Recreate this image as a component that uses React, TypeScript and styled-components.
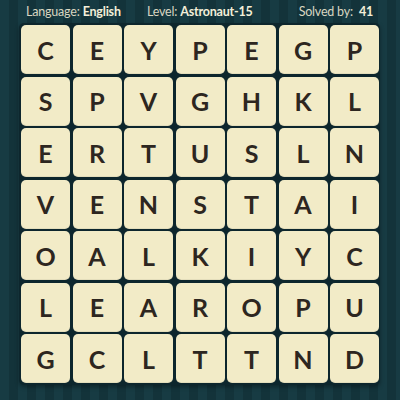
import React from "react";
import styled, { createGlobalStyle } from "styled-components";

const rows = [
  "CEYPEGP",
  "SPVGHKL",
  "ERTUSLN",
  "VENSTAI",
  "OALKIYC",
  "LEAROPU",
  "GCLTTND",
];

const GlobalStyle = createGlobalStyle`
  html, body {
    margin: 0;
    padding: 0;
  }
  body {
    font-family: "Lato", "Noto Sans", sans-serif;
  }
`;

const Page = styled.div`
  width: 400px;
  height: 400px;
  box-sizing: border-box;
  padding: 2px 0 0 21px;
  background-color: #163840;
  background-image: repeating-linear-gradient(
    90deg,
    #173b43 0px,
    #173b43 9px,
    #13333a 9px,
    #13333a 18px
  );
  overflow: hidden;
`;

const InfoBar = styled.div`
  display: flex;
  align-items: center;
  width: 357px;
  height: 18px;
  padding: 0 5px;
  box-sizing: border-box;
  font-size: 12.5px;
  color: #d9d6c1;
  letter-spacing: -0.2px;
`;

const Info = styled.div<{ $grow?: boolean }>`
  flex: ${(p) => (p.$grow ? 1 : "none")};
  white-space: nowrap;

  b {
    font-weight: 700;
    color: #f3efd9;
  }
`;

const Board = styled.div`
  margin-top: 3px;
  margin-left: -2px;
  width: 361px;
  padding: 2px;
  box-sizing: border-box;
  background: #0d262d;
  border-radius: 5px;
  display: grid;
  grid-template-columns: repeat(7, 49px);
  grid-auto-rows: 49px;
  gap: 2.5px;
  box-shadow: 0 2px 4px rgba(0, 0, 0, 0.35);
`;

const Tile = styled.div`
  background: #f2ebc7;
  border-radius: 5px;
  display: flex;
  align-items: center;
  justify-content: center;
  font-size: 25px;
  font-weight: 700;
  color: #2d2620;
  box-shadow: inset 0 -1px 0 rgba(0, 0, 0, 0.06);
`;

export default function App() {
  return (
    <>
      <GlobalStyle />
      <Page>
        <InfoBar>
          <Info style={{ width: 121 }}>
            Language: <b>English</b>
          </Info>
          <Info $grow>
            Level: <b>Astronaut-15</b>
          </Info>
          <Info>
            Solved by:&nbsp; <b>41</b>
          </Info>
        </InfoBar>
        <Board>
          {rows.map((row, r) =>
            row.split("").map((ch, c) => <Tile key={`${r}-${c}`}>{ch}</Tile>)
          )}
        </Board>
      </Page>
    </>
  );
}
